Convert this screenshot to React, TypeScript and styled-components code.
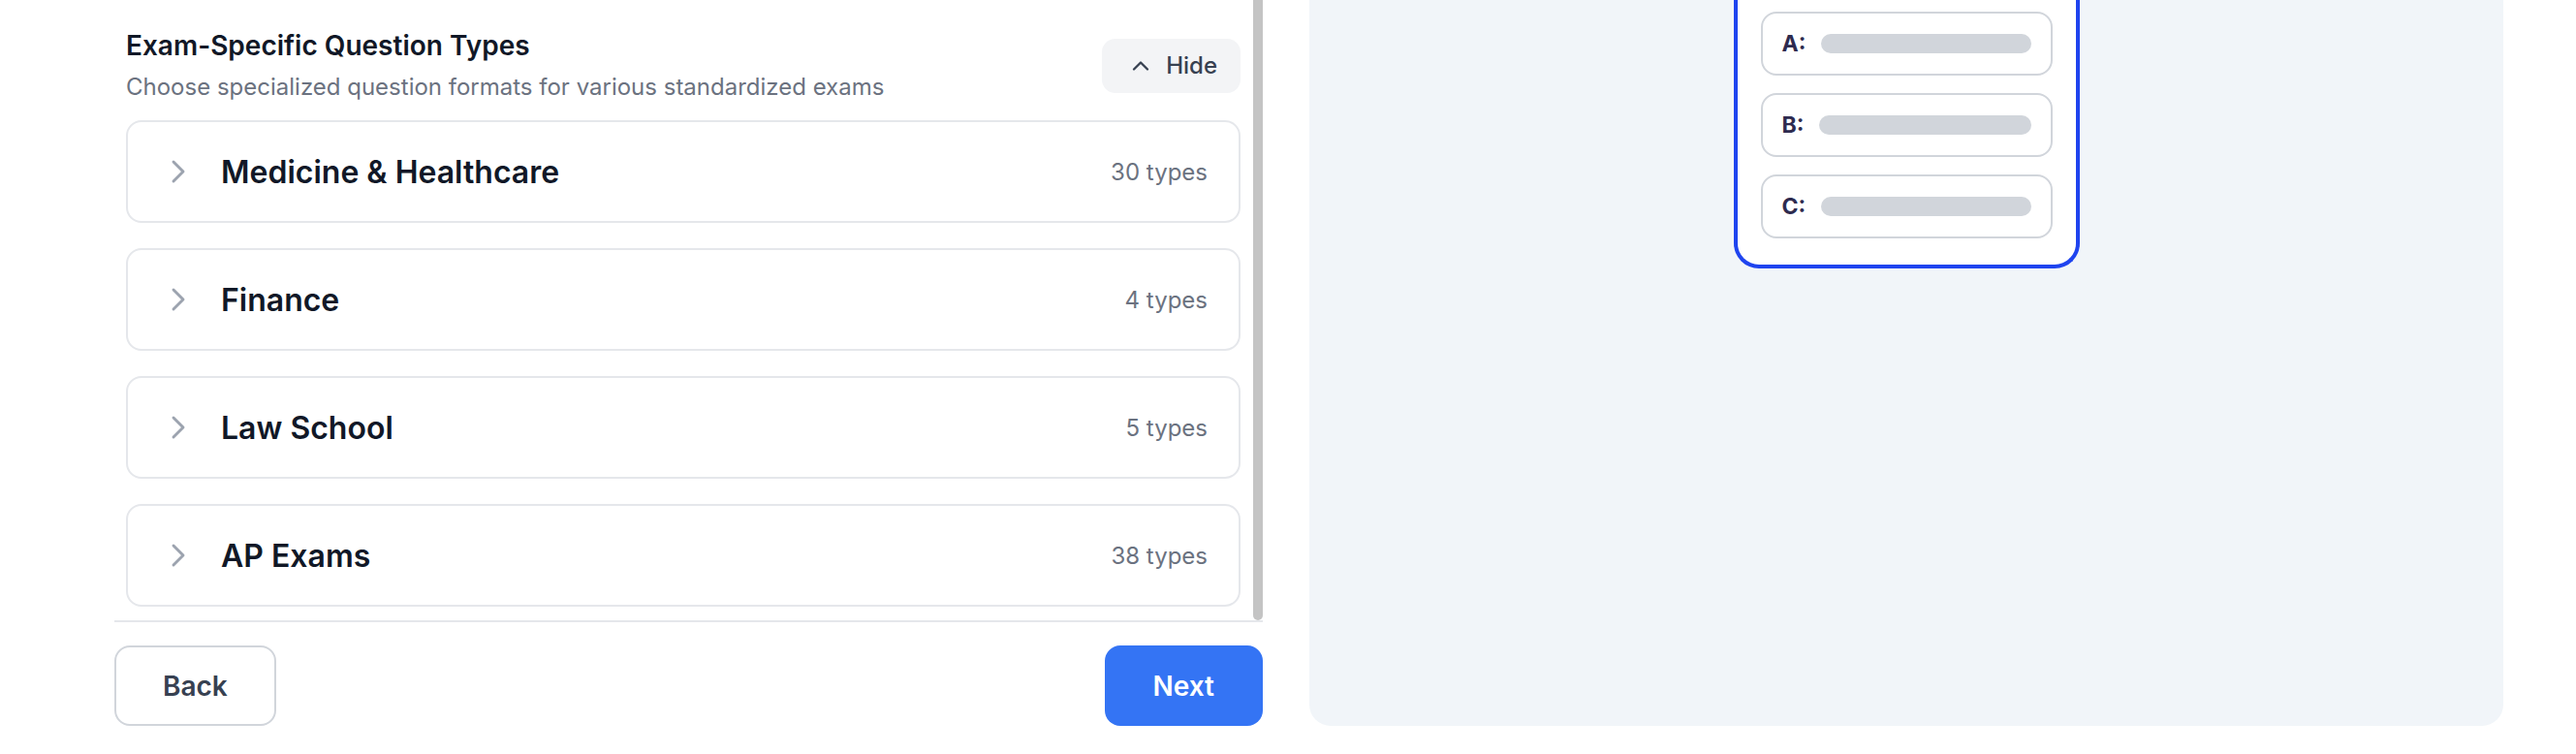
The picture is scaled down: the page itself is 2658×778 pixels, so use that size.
import React from "react";
import styled, { createGlobalStyle } from "styled-components";
import { ChevronRight, ChevronUp } from "lucide-react";

interface ExamCategory {
    name: string;
    count: number;
}

const categories: ExamCategory[] = [
    { name: "Medicine & Healthcare", count: 30 },
    { name: "Finance", count: 4 },
    { name: "Law School", count: 5 },
    { name: "AP Exams", count: 38 },
];

const answerOptions = ["A", "B", "C"];

export default function App() {
    return (
        <>
            <GlobalStyle />
            <Page>
                <LeftColumn>
                    <ScrollArea>
                        <List>
                            {/* --- SECTION HEADER --- */}
                            <SectionHeader>
                                <HeaderText>
                                    <SectionTitle>Exam-Specific Question Types</SectionTitle>
                                    <SectionSubtitle>
                                        Choose specialized question formats for various standardized exams
                                    </SectionSubtitle>
                                </HeaderText>
                                <HideButton>
                                    <ChevronUp size={28} strokeWidth={2} />
                                    Hide
                                </HideButton>
                            </SectionHeader>

                            {/* --- CATEGORY CARDS --- */}
                            {categories.map((c) => (
                                <CategoryCard key={c.name}>
                                    <CardLeft>
                                        <Chevron>
                                            <ChevronRight size={40} strokeWidth={1.75} />
                                        </Chevron>
                                        <CategoryName>{c.name}</CategoryName>
                                    </CardLeft>
                                    <TypeCount>{c.count} types</TypeCount>
                                </CategoryCard>
                            ))}
                        </List>
                        <ScrollTrack>
                            <ScrollThumb />
                        </ScrollTrack>
                    </ScrollArea>

                    <Footer>
                        <BackButton>Back</BackButton>
                        <NextButton>Next</NextButton>
                    </Footer>
                </LeftColumn>

                {/* --- PREVIEW PANEL --- */}
                <PreviewPanel>
                    <PhoneFrame>
                        {answerOptions.map((letter) => (
                            <OptionRow key={letter}>
                                <OptionLabel>{letter}:</OptionLabel>
                                <OptionBar />
                            </OptionRow>
                        ))}
                    </PhoneFrame>
                </PreviewPanel>
            </Page>
        </>
    );
}

/* ---- Global ---- */
const GlobalStyle = createGlobalStyle`
    * { box-sizing: border-box; }
    html, body {
        margin: 0;
        padding: 0;
        background: #ffffff;
        font-family: "Inter", "Noto Sans", sans-serif;
    }
    button { font-family: inherit; }
`;

/* ---- Page layout ---- */
const Page = styled.div`
    display: flex;
    gap: 48px;
    height: 778px;
    padding: 0 75px 29px 118px;
    overflow: hidden;
`;

const LeftColumn = styled.div`
    width: 1185px;
    flex-shrink: 0;
    display: flex;
    flex-direction: column;
`;

const ScrollArea = styled.div`
    display: flex;
    height: 642px;
    border-bottom: 2px solid #e5e7eb;
`;

const List = styled.div`
    flex: 1;
    display: flex;
    flex-direction: column;
    gap: 26px;
    padding: 29px 13px 0 12px;
    overflow: hidden;
`;

const ScrollTrack = styled.div`
    width: 10px;
    flex-shrink: 0;
    display: flex;
`;

const ScrollThumb = styled.div`
    flex: 1;
    background: #c4c4c4;
    border-radius: 0 0 5px 5px;
`;

/* ---- Header ---- */
const SectionHeader = styled.div`
    display: flex;
    justify-content: space-between;
    align-items: center;
    margin-bottom: -8px;
`;

const HeaderText = styled.div`
    display: flex;
    flex-direction: column;
    gap: 9px;
`;

const SectionTitle = styled.div`
    font-size: 28px;
    line-height: 36px;
    font-weight: 600;
    color: #111827;
`;

const SectionSubtitle = styled.div`
    font-size: 24px;
    line-height: 32px;
    color: #6b7280;
`;

const HideButton = styled.button`
    display: flex;
    align-items: center;
    gap: 12px;
    height: 56px;
    padding: 0 24px 0 26px;
    border: none;
    border-radius: 14px;
    background: #f3f4f6;
    color: #374151;
    font-size: 24px;
    font-weight: 500;
    cursor: pointer;
`;

/* ---- Category cards ---- */
const CategoryCard = styled.div`
    display: flex;
    align-items: center;
    justify-content: space-between;
    height: 106px;
    padding: 0 32px;
    border: 2px solid #e5e7eb;
    border-radius: 16px;
    background: #ffffff;
    flex-shrink: 0;
`;

const CardLeft = styled.div`
    display: flex;
    align-items: center;
    gap: 24px;
`;

const Chevron = styled.span`
    display: flex;
    color: #9ca3af;
`;

const CategoryName = styled.div`
    font-size: 32px;
    font-weight: 600;
    color: #111827;
`;

const TypeCount = styled.div`
    font-size: 24px;
    color: #6b7280;
`;

/* ---- Footer ---- */
const Footer = styled.div`
    display: flex;
    justify-content: space-between;
    align-items: center;
    padding-top: 24px;
`;

const FooterButton = styled.button`
    height: 83px;
    border-radius: 16px;
    font-size: 28px;
    font-weight: 600;
    cursor: pointer;
`;

const BackButton = styled(FooterButton)`
    padding: 0 48px;
    background: #ffffff;
    border: 2px solid #d1d5db;
    color: #374151;
`;

const NextButton = styled(FooterButton)`
    padding: 0 50px;
    background: #3474f4;
    border: none;
    color: #ffffff;
`;

/* ---- Preview ---- */
const PreviewPanel = styled.div`
    flex: 1;
    display: flex;
    justify-content: center;
    align-items: flex-start;
    background: #f1f5f9;
    border-radius: 0 0 22px 22px;
`;

const PhoneFrame = styled.div`
    width: 357px;
    display: flex;
    flex-direction: column;
    gap: 18px;
    padding: 12px 24px 27px;
    background: #ffffff;
    border: 4px solid #1f44ef;
    border-top: none;
    border-radius: 0 0 26px 26px;
`;

const OptionRow = styled.div`
    display: flex;
    align-items: center;
    gap: 16px;
    height: 66px;
    padding: 0 20px;
    border: 2px solid #d1d5db;
    border-radius: 16px;
`;

const OptionLabel = styled.span`
    font-size: 23px;
    font-weight: 700;
    color: #2e2b4f;
`;

const OptionBar = styled.div`
    flex: 1;
    height: 20px;
    border-radius: 10px;
    background: #d1d5db;
`;
